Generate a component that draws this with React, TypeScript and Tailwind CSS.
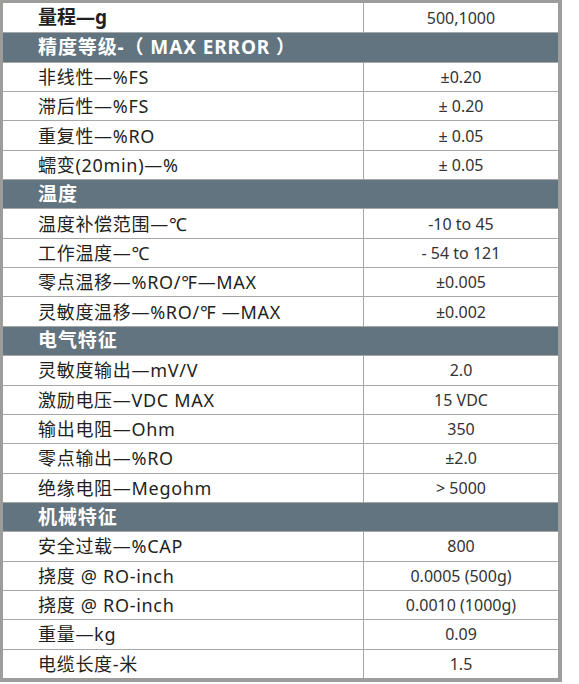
type Row =
  | { kind: "head"; label: string }
  | { kind: "row"; label: string; value: string; bold?: boolean };

const rows: Row[] = [
  { kind: "row", label: "量程—g", value: "500,1000", bold: true },
  { kind: "head", label: "精度等级-（ MAX ERROR ）" },
  { kind: "row", label: "非线性—%FS", value: "±0.20" },
  { kind: "row", label: "滞后性—%FS", value: "± 0.20" },
  { kind: "row", label: "重复性—%RO", value: "± 0.05" },
  { kind: "row", label: "蠕变(20min)—%", value: "± 0.05" },
  { kind: "head", label: "温度" },
  { kind: "row", label: "温度补偿范围—℃", value: "-10 to 45" },
  { kind: "row", label: "工作温度—℃", value: "- 54 to 121" },
  { kind: "row", label: "零点温移—%RO/℉—MAX", value: "±0.005" },
  { kind: "row", label: "灵敏度温移—%RO/℉ —MAX", value: "±0.002" },
  { kind: "head", label: "电气特征" },
  { kind: "row", label: "灵敏度输出—mV/V", value: "2.0" },
  { kind: "row", label: "激励电压—VDC MAX", value: "15 VDC" },
  { kind: "row", label: "输出电阻—Ohm", value: "350" },
  { kind: "row", label: "零点输出—%RO", value: "±2.0" },
  { kind: "row", label: "绝缘电阻—Megohm", value: "> 5000" },
  { kind: "head", label: "机械特征" },
  { kind: "row", label: "安全过载—%CAP", value: "800" },
  { kind: "row", label: "挠度 @ RO-inch", value: "0.0005 (500g)" },
  { kind: "row", label: "挠度 @ RO-inch", value: "0.0010 (1000g)" },
  { kind: "row", label: "重量—kg", value: "0.09" },
  { kind: "row", label: "电缆长度-米", value: "1.5" },
];

const font = { fontFamily: '"Noto Sans", "Noto Sans CJK SC", sans-serif' };

export default function App() {
  return (
    <div className="bg-white w-[579px] h-[684px]" style={font}>
      <div className="w-[562px] h-[682px] border-l-[3px] border-t-[3px] border-r-4 border-b-4 border-[#9d9e9c] grid grid-rows-[repeat(23,1fr)] text-[#231f20]">
        {rows.map((r, i) =>
          r.kind === "head" ? (
            <div
              key={i}
              className="bg-[#627480] text-white font-bold text-[19px] tracking-[0.9px] leading-none flex items-center pl-[35px] border-t border-[#a6a8a7]"
            >
              {r.label}
            </div>
          ) : (
            <div
              key={i}
              className={`grid grid-cols-[361px_1fr] ${i === 0 ? "" : "border-t border-[#a6a8a7]"}`}
            >
              <div
                className={`flex items-center pl-[35px] leading-none border-r border-[#a6a8a7] ${
                  r.bold ? "font-bold text-[19px]" : "text-[18px] tracking-[0.7px]"
                }`}
              >
                {r.label}
              </div>
              <div className="flex items-center justify-center text-[16px] leading-none text-[#333]">
                {r.value}
              </div>
            </div>
          )
        )}
      </div>
    </div>
  );
}
